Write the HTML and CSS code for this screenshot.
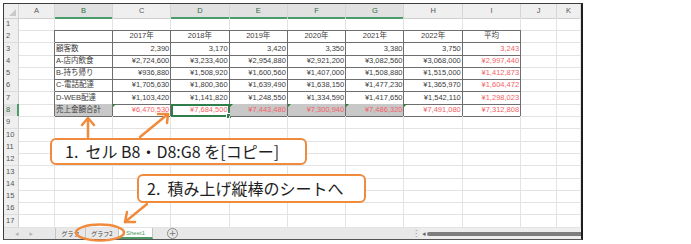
FILE: index.html
```html
<!DOCTYPE html>
<html>
<head>
  <meta charset="utf-8">
  <title>売上集計</title>
  <link rel="stylesheet" href="styles.css">
</head>
<body>
  <div class="window">
    <div class="sheet">
      <div class="row head">
        <div class="corner"></div>
        <div class="ch">A</div><div class="ch on">B</div><div class="ch">C</div><div class="ch on">D</div><div class="ch on">E</div>
        <div class="ch on">F</div><div class="ch on">G</div><div class="ch">H</div><div class="ch">I</div><div class="ch">J</div><div class="ch">K</div>
      </div>
      <div class="row">
        <div class="rh">1</div><div class="c"></div>
        <div class="c tt"></div><div class="c tt"></div><div class="c tt"></div><div class="c tt"></div><div class="c tt"></div><div class="c tt"></div><div class="c tt"></div><div class="c tt"></div>
        <div class="c"></div><div class="c"></div>
      </div>
      <div class="row">
        <div class="rh">2</div><div class="c tl"></div>
        <div class="c t"></div>
        <div class="c t mid">2017年</div><div class="c t mid">2018年</div><div class="c t mid">2019年</div><div class="c t mid">2020年</div>
        <div class="c t mid">2021年</div><div class="c t mid">2022年</div><div class="c t mid">平均</div>
        <div class="c"></div><div class="c"></div>
      </div>
      <div class="row">
        <div class="rh">3</div><div class="c tl"></div>
        <div class="c t">顧客数</div>
        <div class="c t num">2,390</div><div class="c t num">3,170</div><div class="c t num">3,420</div><div class="c t num">3,350</div>
        <div class="c t num">3,380</div><div class="c t num">3,750</div><div class="c t num red">3,243</div>
        <div class="c"></div><div class="c"></div>
      </div>
      <div class="row">
        <div class="rh">4</div><div class="c tl"></div>
        <div class="c t">A-店内飲食</div>
        <div class="c t num">¥2,724,600</div><div class="c t num">¥3,233,400</div><div class="c t num">¥2,954,880</div><div class="c t num">¥2,921,200</div>
        <div class="c t num">¥3,082,560</div><div class="c t num">¥3,068,000</div><div class="c t num red">¥2,997,440</div>
        <div class="c"></div><div class="c"></div>
      </div>
      <div class="row">
        <div class="rh">5</div><div class="c tl"></div>
        <div class="c t">B-持ち帰り</div>
        <div class="c t num">¥936,880</div><div class="c t num">¥1,508,920</div><div class="c t num">¥1,600,560</div><div class="c t num">¥1,407,000</div>
        <div class="c t num">¥1,508,880</div><div class="c t num">¥1,515,000</div><div class="c t num red">¥1,412,873</div>
        <div class="c"></div><div class="c"></div>
      </div>
      <div class="row">
        <div class="rh">6</div><div class="c tl"></div>
        <div class="c t">C-電話配達</div>
        <div class="c t num">¥1,705,630</div><div class="c t num">¥1,800,360</div><div class="c t num">¥1,639,490</div><div class="c t num">¥1,638,150</div>
        <div class="c t num">¥1,477,230</div><div class="c t num">¥1,365,970</div><div class="c t num red">¥1,604,472</div>
        <div class="c"></div><div class="c"></div>
      </div>
      <div class="row">
        <div class="rh">7</div><div class="c tl"></div>
        <div class="c t">D-WEB配達</div>
        <div class="c t num">¥1,103,420</div><div class="c t num">¥1,141,820</div><div class="c t num">¥1,248,550</div><div class="c t num">¥1,334,590</div>
        <div class="c t num">¥1,417,650</div><div class="c t num">¥1,542,110</div><div class="c t num red">¥1,298,023</div>
        <div class="c"></div><div class="c"></div>
      </div>
      <div class="row">
        <div class="rh on">8</div><div class="c tl"></div>
        <div class="c t sel">売上金額合計</div>
        <div class="c t num red flag">¥6,470,530</div>
        <div class="c t num red flag act">¥7,684,500</div>
        <div class="c t num red flag sel">¥7,443,480</div>
        <div class="c t num red flag sel">¥7,300,940</div>
        <div class="c t num red flag sel">¥7,486,320</div>
        <div class="c t num red flag">¥7,491,080</div>
        <div class="c t num red">¥7,312,808</div>
        <div class="c"></div><div class="c"></div>
      </div>
      <div class="row"><div class="rh">9</div><div class="c"></div><div class="c"></div><div class="c"></div><div class="c"></div><div class="c"></div><div class="c"></div><div class="c"></div><div class="c"></div><div class="c"></div><div class="c"></div><div class="c"></div></div>
      <div class="row"><div class="rh">10</div><div class="c"></div><div class="c"></div><div class="c"></div><div class="c"></div><div class="c"></div><div class="c"></div><div class="c"></div><div class="c"></div><div class="c"></div><div class="c"></div><div class="c"></div></div>
      <div class="row"><div class="rh">11</div><div class="c"></div><div class="c"></div><div class="c"></div><div class="c"></div><div class="c"></div><div class="c"></div><div class="c"></div><div class="c"></div><div class="c"></div><div class="c"></div><div class="c"></div></div>
      <div class="row"><div class="rh">12</div><div class="c"></div><div class="c"></div><div class="c"></div><div class="c"></div><div class="c"></div><div class="c"></div><div class="c"></div><div class="c"></div><div class="c"></div><div class="c"></div><div class="c"></div></div>
      <div class="row"><div class="rh">13</div><div class="c"></div><div class="c"></div><div class="c"></div><div class="c"></div><div class="c"></div><div class="c"></div><div class="c"></div><div class="c"></div><div class="c"></div><div class="c"></div><div class="c"></div></div>
      <div class="row"><div class="rh">14</div><div class="c"></div><div class="c"></div><div class="c"></div><div class="c"></div><div class="c"></div><div class="c"></div><div class="c"></div><div class="c"></div><div class="c"></div><div class="c"></div><div class="c"></div></div>
      <div class="row"><div class="rh">15</div><div class="c"></div><div class="c"></div><div class="c"></div><div class="c"></div><div class="c"></div><div class="c"></div><div class="c"></div><div class="c"></div><div class="c"></div><div class="c"></div><div class="c"></div></div>
      <div class="row"><div class="rh">16</div><div class="c"></div><div class="c"></div><div class="c"></div><div class="c"></div><div class="c"></div><div class="c"></div><div class="c"></div><div class="c"></div><div class="c"></div><div class="c"></div><div class="c"></div></div>
      <div class="row"><div class="rh">17</div><div class="c"></div><div class="c"></div><div class="c"></div><div class="c"></div><div class="c"></div><div class="c"></div><div class="c"></div><div class="c"></div><div class="c"></div><div class="c"></div><div class="c"></div></div>
    </div>

    <div class="tabs">
      <div class="nav"><span>&#9664;</span><span>&#9654;</span></div>
      <div class="tab">グラフ</div>
      <div class="tab">グラフ2</div>
      <div class="tab active">Sheet1</div>
      <div class="add">+</div>
      <div class="spacer"></div>
      <div class="grip">&#8942;</div>
      <div class="hscroll">
        <span class="arrow">&#9664;</span>
        <div class="thumb"></div>
      </div>
    </div>
  </div>

  <!-- callouts over the sheet -->
  <div class="callout one">1.&nbsp; セル B8・D8:G8 を[コピー]</div>
  <div class="callout two">2.&nbsp; 積み上げ縦棒のシートへ</div>

  <svg class="marks" width="691" height="244" viewBox="0 0 691 244">
    <g fill="none" stroke="#f08a3c" stroke-width="2.5" stroke-linecap="round" stroke-linejoin="round">
      <line x1="88" y1="137" x2="88" y2="119"/>
      <polyline points="82,125 88,118 94,125"/>
      <line x1="140" y1="137" x2="168" y2="114"/>
      <polyline points="158,114 168,114 167,123"/>
      <line x1="147" y1="204" x2="125" y2="222"/>
      <polyline points="127,212 125,222 135,222"/>
      <ellipse cx="100" cy="232.5" rx="24" ry="8"/>
    </g>
  </svg>
</body>
</html>
```

FILE: styles.css
```css
/* Excel-like sheet with orange callouts */
body {
  margin: 0;
  background-color: #fff;
  font-family: 'Liberation Sans', 'Noto Sans CJK JP', sans-serif;
  position: relative;
  width: 691px;
  height: 244px;
  overflow: hidden;
}

.window {
  margin: 3px 0 0 3px;
  width: 577px;
  border-top: 1px solid #3c3c3c;
  border-left: 1px solid #3c3c3c;
  border-right: 2px solid #1e1e1e;
  border-bottom: 1px solid #555;
  overflow: hidden;
}

.row {
  display: grid;
  grid-template-columns: 15px 36px 58px repeat(7, 58.3px) 36px 1fr;
  height: 12.3px;
}

.row.head {
  height: 14px;
}

/* column + row headers */
.corner,
.ch,
.rh {
  background-color: #efefef;
  color: #555;
  font-size: 7.5px;
  box-sizing: border-box;
}

.corner {
  border-right: 1px solid #d4d4d4;
  border-bottom: 1px solid #cfcfcf;
  position: relative;
}

.corner::after {
  content: "";
  position: absolute;
  right: 2px;
  bottom: 2px;
  border-left: 7px solid transparent;
  border-bottom: 7px solid #c9c9c9;
}

.ch {
  text-align: center;
  line-height: 13px;
  border-right: 1px solid #d6d6d6;
  border-bottom: 1px solid #cfcfcf;
}

.ch.on {
  background-color: #e1e1e1;
  color: #2f6e46;
  border-bottom: 2px solid #4a9c68;
}

.rh {
  padding-left: 2px;
  line-height: 12px;
  border-right: 1px solid #cfcfcf;
  border-bottom: 1px solid #dcdcdc;
}

.rh.on {
  background-color: #e1e1e1;
  color: #2f6e46;
  border-right: 2px solid #4a9c68;
}

/* cells */
.c {
  box-sizing: border-box;
  border-right: 1px solid #e3e3e3;
  border-bottom: 1px solid #e3e3e3;
  font-size: 7.5px;
  line-height: 11px;
  color: #3c3c3c;
  padding: 0 1px;
  white-space: nowrap;
  overflow: hidden;
  position: relative;
}

.c.t {
  border-right: 1px solid #6e6e6e;
  border-bottom: 1px solid #6e6e6e;
}

.c.tl {
  border-right: 1px solid #6e6e6e;
}

.c.tt {
  border-bottom: 1px solid #6e6e6e;
}

.num {
  text-align: right;
}

.mid {
  text-align: center;
}

.red {
  color: #f45f66;
}

.sel {
  background-color: #c8c8c8;
}

.act {
  outline: 2px solid #2e7d4a;
  outline-offset: -2px;
  overflow: visible;
}

.act::after {
  content: "";
  position: absolute;
  right: -3px;
  bottom: -3px;
  width: 4px;
  height: 4px;
  background-color: #2e7d4a;
  border: 1px solid #fff;
}

.flag::before {
  content: "";
  position: absolute;
  left: 0;
  top: 0;
  border-top: 3px solid #2f7d3a;
  border-right: 3px solid transparent;
}

/* sheet tabs + scrollbar */
.tabs {
  display: flex;
  align-items: stretch;
  height: 12px;
  background-color: #e8e8e8;
  border-top: 1px solid #cfcfcf;
  box-sizing: border-box;
  font-family: 'Noto Sans CJK JP', sans-serif;
  font-size: 6px;
  color: #444;
}

.nav {
  width: 51px;
  display: flex;
  align-items: center;
  gap: 10px;
  padding-left: 11px;
  box-sizing: border-box;
  color: #b4b4b4;
  font-size: 4px;
}

.tab {
  width: 30px;
  box-sizing: border-box;
  text-align: center;
  line-height: 11px;
  white-space: nowrap;
  border-left: 1px solid #c4c4c4;
}

.tab + .tab {
  width: 33px;
}

.tab.active {
  background-color: #fff;
  color: #4d9b65;
  width: 35px;
  border-bottom: 2px solid #4d9b65;
  border-right: 1px solid #c4c4c4;
  font-family: 'Liberation Sans', sans-serif;
}

.add {
  margin-left: 14px;
  width: 9px;
  height: 9px;
  align-self: center;
  border: 1px solid #8c8c8c;
  border-radius: 50%;
  color: #777;
  font-size: 9px;
  line-height: 9px;
  text-align: center;
  font-family: 'DejaVu Sans', sans-serif;
}

.spacer {
  flex: 1;
}

.grip {
  width: 8px;
  line-height: 11px;
  color: #888;
  font-size: 8px;
  font-family: 'DejaVu Sans', sans-serif;
}

.hscroll {
  width: 161px;
  display: flex;
  align-items: center;
  background-color: #eeeeee;
}

.hscroll .arrow {
  font-size: 4px;
  color: #666;
  padding: 0 1px 0 2px;
}

.thumb {
  flex: 1;
  height: 4px;
  background-color: #7d7d7d;
  border-radius: 2px 0 0 2px;
}

/* orange callouts */
.callout {
  position: absolute;
  box-sizing: border-box;
  border: 2.5px solid #f08a3c;
  border-radius: 6px;
  background-color: #fff;
  color: #1e1e1e;
  font-family: 'Noto Sans CJK JP', sans-serif;
  font-size: 16px;
  white-space: nowrap;
}

.callout.one {
  left: 50px;
  top: 138px;
  width: 257px;
  height: 27px;
  line-height: 22px;
  padding-left: 13px;
}

.callout.two {
  left: 137px;
  top: 174px;
  width: 229px;
  height: 29px;
  line-height: 24px;
  padding-left: 8px;
}

.marks {
  position: absolute;
  left: 0;
  top: 0;
  pointer-events: none;
}
```
